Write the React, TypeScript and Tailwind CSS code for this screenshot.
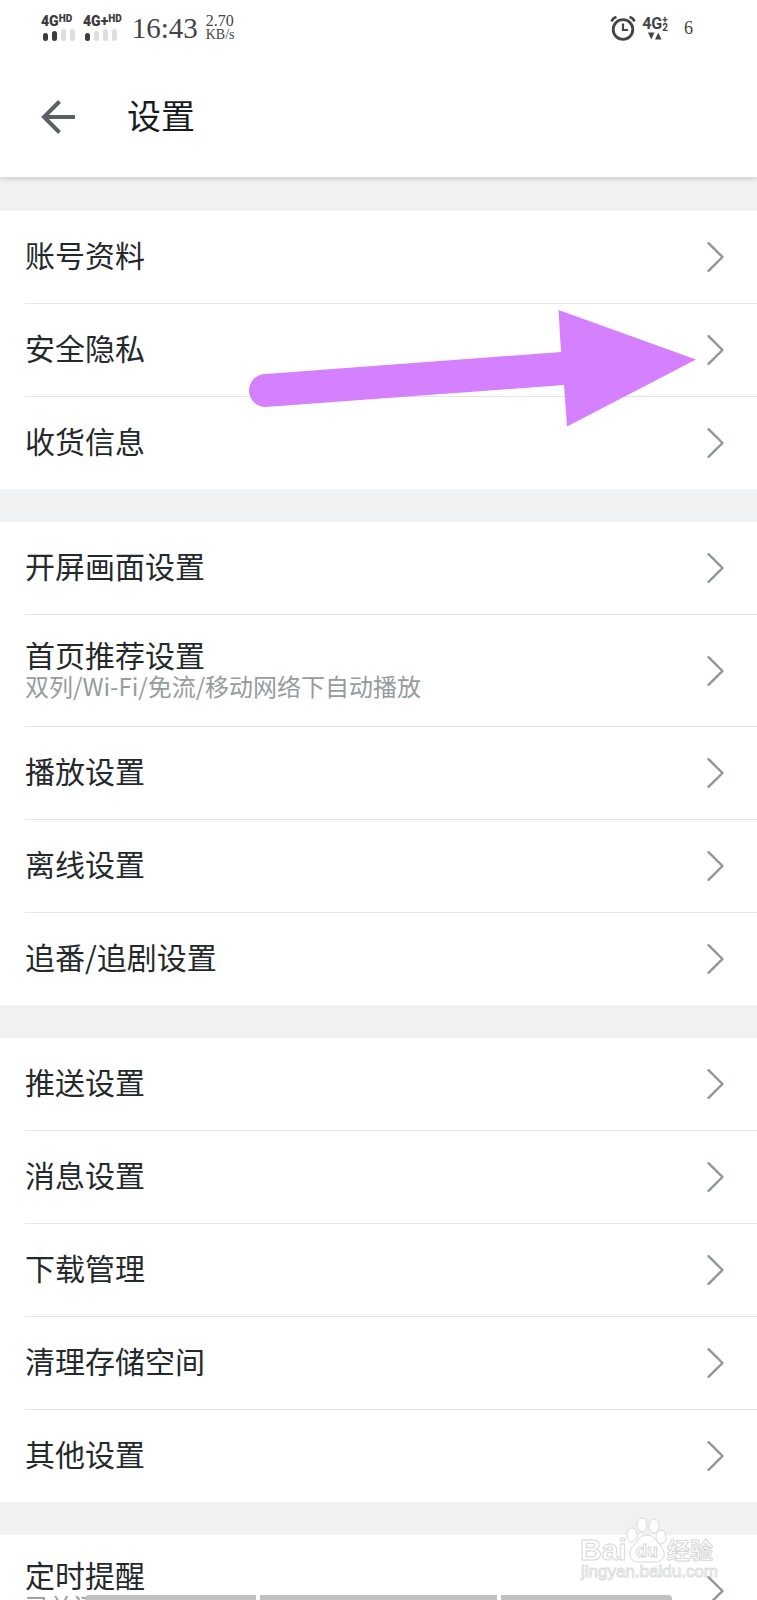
import React from "react";

type Item = { label: string; note?: string };

const groups: Item[][] = [
  [{ label: "账号资料" }, { label: "安全隐私" }, { label: "收货信息" }],
  [
    { label: "开屏画面设置" },
    { label: "首页推荐设置", note: "双列/Wi-Fi/免流/移动网络下自动播放" },
    { label: "播放设置" },
    { label: "离线设置" },
    { label: "追番/追剧设置" },
  ],
  [
    { label: "推送设置" },
    { label: "消息设置" },
    { label: "下载管理" },
    { label: "清理存储空间" },
    { label: "其他设置" },
  ],
  [{ label: "定时提醒", note: "已关闭" }],
];

function Chevron() {
  return (
    <svg className="h-8 w-5 shrink-0" viewBox="0 0 20 32" fill="none" stroke="#8e9697" strokeWidth="2.4" strokeLinecap="round" strokeLinejoin="round" aria-hidden="true">
      <path d="M3.500 2.200 17.500 16 3.500 29.800" />
    </svg>
  );
}

function PointerArrow() {
  return (
    <svg className="pointer-events-none absolute top-0 right-14 z-10 h-[124px] w-[460px]" viewBox="-10 0 460 124" aria-hidden="true">
      <path fill="#d580ff" d="M14.500 70 310 48 307.500 6 445 55.500 316 122.500 313 81 14.500 103A16.500 16.500 0 0 1 14.500 70Z" />
    </svg>
  );
}

function Row({ item }: { item: Item }) {
  return (
    <li className="group pl-[25px]">
      <a
        href="#"
        className={
          "flex items-center justify-between border-b border-[#e4e6e6] pr-8 group-last:border-b-0 " +
          (item.note ? "h-28" : "h-[93px] group-last:h-[92px]")
        }
      >
        <span className="flex flex-col pb-1.5">
          <span className="text-[30px] leading-9 text-[#24292b]">{item.label}</span>
          {item.note && <span className="text-2xl leading-7 text-[#959c9d]">{item.note}</span>}
        </span>
        <Chevron />
      </a>
    </li>
  );
}

function Signal({ label, level }: { label: string; level: number }) {
  return (
    <div className="flex flex-col gap-0.5 font-['Roboto',sans-serif] font-black text-[#3c3c3c]">
      <div className="flex items-start leading-3">
        <span className="text-sm leading-3">{label}</span>
        <span className="text-[10px] leading-2">HD</span>
      </div>
      <div className="flex h-3 items-end gap-1 pl-0.5">
        {["h-2", "h-2.5", "h-3", "h-3"].map((h, i) => (
          <span key={i} className={"w-[5px] rounded-sm " + h + (i < level ? " bg-[#3c3c3c]" : " bg-[#dedede]")} />
        ))}
      </div>
    </div>
  );
}

function StatusBar() {
  return (
    <div className="flex h-14 items-center justify-between pr-16 pl-[41px] font-['Liberation_Serif','Noto_Sans_CJK_SC',serif] text-[#444]">
      <div className="flex items-center">
        <Signal label="4G" level={2} />
        <div className="w-2" />
        <Signal label="4G+" level={1} />
        <span className="ml-2.5 text-[29px] leading-8">16:43</span>
        <span className="ml-2 flex flex-col">
          <span className="text-base leading-[14px]">2.70</span>
          <span className="text-sm leading-[14px]">KB/s</span>
        </span>
      </div>
      <div className="flex items-center">
        <svg className="h-[26px] w-[26px]" viewBox="0 0 26 26" fill="none" stroke="#444" aria-hidden="true">
          <circle cx="13" cy="14.500" r="9.800" strokeWidth="2.800" />
          <path d="M13 8.500V15H18" strokeWidth="2.200" />
          <path d="M1.500 6.500A7 7 0 0 1 6.500 2M19.500 2A7 7 0 0 1 24.500 6.500" strokeWidth="2.400" />
        </svg>
        <div className="ml-1.5 flex flex-col items-center font-['Roboto',sans-serif] font-bold">
          <div className="flex">
            <span className="text-base leading-4">4G</span>
            <span className="flex flex-col text-[10px] leading-2">
              <span>+</span>
              <span>2</span>
            </span>
          </div>
          <svg className="h-2 w-3.5" viewBox="0 0 14 8" fill="#444" aria-hidden="true">
            <path d="M0 0.500H6.500L3.250 7.500ZM7 7.500H13.500L10.250 0.500Z" />
          </svg>
        </div>
        <span className="ml-4 text-lg">6</span>
      </div>
    </div>
  );
}

function Watermark() {
  return (
    <svg className="pointer-events-none absolute right-9 bottom-4 z-10 h-[68px] w-[141px]" viewBox="0 0 141 68" fill="#fff" stroke="#d6d8d9" strokeWidth="1" aria-hidden="true">
      <g fontFamily="Liberation Sans, Noto Sans CJK SC, sans-serif" fontWeight="700">
        <text x="0" y="44" fontSize="30">Bai</text>
        <text x="87" y="43" fontSize="23">经验</text>
        <ellipse cx="52" cy="19" rx="5" ry="7" />
        <ellipse cx="62" cy="9" rx="5" ry="7" />
        <ellipse cx="74" cy="10" rx="5" ry="7" />
        <ellipse cx="81" cy="21" rx="5" ry="7" />
        <path d="M67 19C74 19 76 25 80 29C87 36 85 46 75 46H59C49 46 47 36 54 29C58 25 60 19 67 19Z" />
        <text x="56" y="41" fontSize="18">du</text>
        <text x="1" y="61" fontSize="17" fontWeight="400" stroke="#dcdede">jingyan.baidu.com</text>
      </g>
    </svg>
  );
}

export default function App() {
  return (
    <div className="relative flex h-screen flex-col overflow-hidden bg-[#f0f1f3] font-['Noto_Sans_CJK_SC',sans-serif]">
      <header className="relative shrink-0 bg-white shadow-[0_1px_6px_rgba(0,0,0,0.2)]">
        <StatusBar />
        <div className="flex h-[121px] items-center pl-10">
          <button type="button" aria-label="返回" className="mr-[52px]">
            <svg className="h-[34px] w-[35px]" viewBox="0 0 35 34" fill="none" stroke="#596166" strokeWidth="4" aria-hidden="true">
              <path d="M35 17H4M19.500 1.500 4 17 19.500 32.500" />
            </svg>
          </button>
          <h1 className="pb-1 text-[34px] leading-10 text-[#181c1e]">设置</h1>
        </div>
      </header>
      <main className="flex min-h-0 flex-1 flex-col gap-[33px] overflow-hidden pt-[34px]">
        {groups.map((items, i) => (
          <section key={i} className="relative shrink-0 bg-white">
            <ul>
              {items.map((item) => (
                <Row key={item.label} item={item} />
              ))}
            </ul>
            {i === 0 && (
              <div className="absolute inset-x-0 top-[93px]">
                <PointerArrow />
              </div>
            )}
          </section>
        ))}
      </main>
      <Watermark />
      <div className="absolute inset-x-[85px] bottom-0 flex gap-1">
        <span className="h-[5px] w-[171px] rounded-tl bg-[#c1c1c1]" />
        <span className="h-[5px] flex-1 bg-[#c1c1c1]" />
        <span className="h-[5px] w-[171px] rounded-tr bg-[#c1c1c1]" />
      </div>
    </div>
  );
}
